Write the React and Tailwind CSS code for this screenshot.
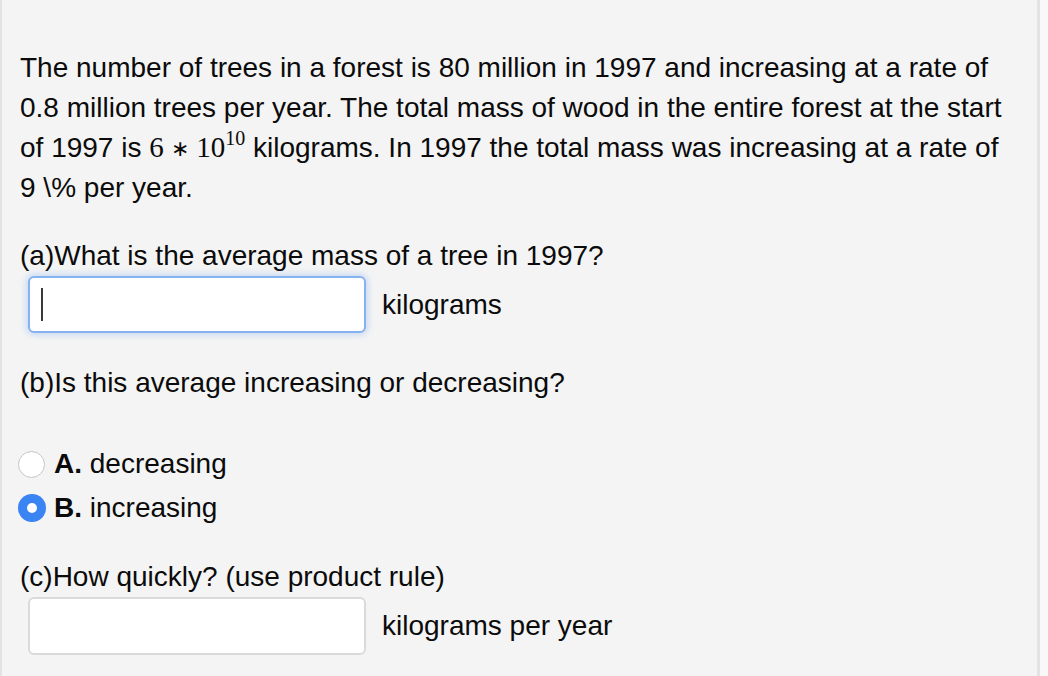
export default function App() {
  const sans = { fontFamily: '"Liberation Sans", Arial, sans-serif' };
  return (
    <div className="w-[1048px] h-[676px] bg-[#f8f8f8] overflow-hidden" style={sans}>
      <div className="w-[1040px] h-[676px] bg-[#f4f4f4] border-l-2 border-r-[3px] border-[#e3e3e3] pl-[18px] pt-[48px] text-[28px] text-[#0b0b0b]">
        <p className="leading-[40px] w-[1000px]">
          The number of trees in a forest is 80 million in 1997 and increasing at a rate of 0.8 million trees per year. The total mass of wood in the entire forest at the start of 1997 is{" "}
          <span className="text-[29px] leading-none" style={{ fontFamily: '"Liberation Serif", "Times New Roman", serif' }}>
            6 <span className="text-[22px] leading-none relative -top-[1px]">∗</span> 10<sup className="text-[20px] relative -top-[12px] leading-none">10</sup>
          </span>{" "}
          kilograms. In 1997 the total mass was increasing at a rate of 9 \% per year.
        </p>

        <p className="leading-[40px] mt-[28px]">(a)What is the average mass of a tree in 1997?</p>
        <div className="flex items-center ml-[8px]">
          <div className="w-[338px] h-[57px] bg-white rounded-[6px] border-2 border-[#86b3f0] shadow-[0_0_6px_2px_rgba(120,170,240,0.35)] flex items-center pl-[11px]">
            <div className="w-[2px] h-[33px] bg-[#3a3a3a]" />
          </div>
          <span className="ml-[16px]">kilograms</span>
        </div>

        <p className="leading-[40px] mt-[30px]">(b)Is this average increasing or decreasing?</p>

        <div className="mt-[41px] flex flex-col gap-[4px]">
          <label className="flex items-center h-[40px] -ml-[2px]">
            <span className="w-[27px] h-[27px] rounded-full bg-white border border-[#c6c6c6] shrink-0" />
            <span className="ml-[9px]"><b>A.</b> decreasing</span>
          </label>
          <label className="flex items-center h-[40px] -ml-[2px]">
            <span className="w-[28px] h-[28px] rounded-full bg-[#3a84f4] flex items-center justify-center shrink-0">
              <span className="w-[10px] h-[10px] rounded-full bg-white" />
            </span>
            <span className="ml-[8px]"><b>B.</b> increasing</span>
          </label>
        </div>

        <p className="leading-[40px] mt-[29px]">(c)How quickly? (use product rule)</p>
        <div className="flex items-center ml-[8px]">
          <div className="w-[338px] h-[58px] bg-white rounded-[6px] border-2 border-[#dadada]" />
          <span className="ml-[16px]">kilograms per year</span>
        </div>
      </div>
    </div>
  );
}
